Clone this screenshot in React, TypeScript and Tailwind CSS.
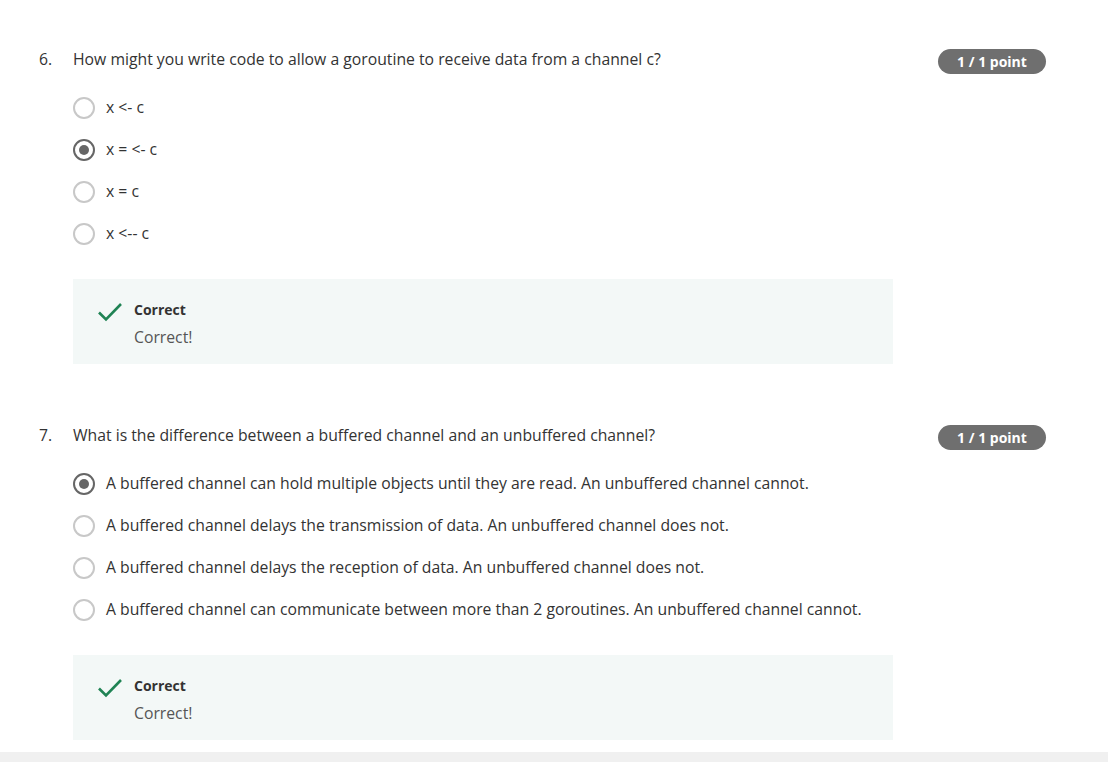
import React from "react";

type Opt = { label: string; checked?: boolean };

function Radio({ checked }: { checked?: boolean }) {
  return checked ? (
    <span className="flex h-[22px] w-[22px] shrink-0 items-center justify-center rounded-full border-2 border-[#666666] bg-white">
      <span className="h-[10px] w-[10px] rounded-full bg-[#666666]" />
    </span>
  ) : (
    <span className="h-[22px] w-[22px] shrink-0 rounded-full border-2 border-[#c8c8c8] bg-white" />
  );
}

function Check() {
  return (
    <svg width="26" height="22" viewBox="0 0 26 22" className="shrink-0">
      <path d="M2 11.5 L9 18.5 L24 3" fill="none" stroke="#1f8354" strokeWidth="2.6" />
    </svg>
  );
}

function Question({ n, text, options }: { n: number; text: string; options: Opt[] }) {
  return (
    <div className="flex flex-col">
      <div className="flex h-6 items-center">
        <div className="w-[34px] text-[15.75px] text-[#333333]">{n}.</div>
        <div className="flex-1 text-[15.75px] text-[#333333]">{text}</div>
        <div className="mt-[3px] flex h-[25px] w-[108px] items-center justify-center rounded-full bg-[#6f6f6f] text-[14px] font-bold text-white">
          1 / 1 point
        </div>
      </div>
      <div className="mt-[15px] flex flex-col pl-[34px]">
        {options.map((o, i) => (
          <div key={i} className="flex h-[42px] items-center gap-[11px]">
            <Radio checked={o.checked} />
            <span className="text-[15.75px] text-[#333333]">{o.label}</span>
          </div>
        ))}
      </div>
      <div className="mt-6 ml-[34px] w-[820px] bg-[#f3f8f7] pl-6 pt-[21px] pb-[15px]">
        <div className="flex gap-[11px]">
          <div className="pt-[1px]">
            <Check />
          </div>
          <div className="flex flex-col">
            <div className="h-5 text-[14px] font-bold leading-5 text-[#333333]">Correct</div>
            <div className="mt-[5px] h-6 text-[15.75px] leading-6 text-[#555555]">Correct!</div>
          </div>
        </div>
      </div>
    </div>
  );
}

export default function App() {
  return (
    <div
      className="flex h-[762px] w-[1108px] flex-col bg-white"
      style={{ fontFamily: '"Open Sans", "Noto Sans", sans-serif' }}
    >
      <div className="flex flex-col pl-[39px] pr-[62px] pt-12">
        <Question
          n={6}
          text="How might you write code to allow a goroutine to receive data from a channel c?"
          options={[
            { label: "x <- c" },
            { label: "x = <- c", checked: true },
            { label: "x = c" },
            { label: "x <-- c" },
          ]}
        />
        <div className="h-[60px]" />
        <Question
          n={7}
          text="What is the difference between a buffered channel and an unbuffered channel?"
          options={[
            {
              label:
                "A buffered channel can hold multiple objects until they are read. An unbuffered channel cannot.",
              checked: true,
            },
            { label: "A buffered channel delays the transmission of data. An unbuffered channel does not." },
            { label: "A buffered channel delays the reception of data. An unbuffered channel does not." },
            {
              label:
                "A buffered channel can communicate between more than 2 goroutines. An unbuffered channel cannot.",
            },
          ]}
        />
      </div>
      <div className="mt-auto h-[10px] w-full bg-[#f0f0f0]" />
    </div>
  );
}
